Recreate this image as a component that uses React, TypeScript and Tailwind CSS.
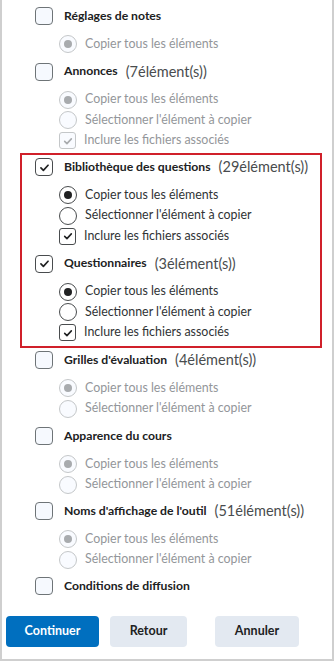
import React from 'react';

type Sub = { kind: 'radio' | 'check'; label: string; on: boolean };

type Section = {
  title: string;
  count?: string;
  checked: boolean;
  subs: Sub[];
  mt: string;
};

const Check = ({ size = 'h-[16px] w-[16px]', stroke = '#202122' }: { size?: string; stroke?: string }) => (
  <svg viewBox="0 0 16 16" className={size} fill="none">
    <path d="M4.2 8.4l2.6 2.6 5-5.4" stroke={stroke} strokeWidth="1.8" strokeLinecap="round" strokeLinejoin="round" />
  </svg>
);

const SubRow = ({ sub, enabled }: { sub: Sub; enabled: boolean }) => {
  return (
    <div className="flex h-[20.5px] items-center pl-[24px]">
      {sub.kind === 'radio' ? (
        <span
          className={
            enabled
              ? 'flex h-[18px] w-[18px] items-center justify-center rounded-full border border-[#494c4e] bg-white'
              : 'flex h-[18px] w-[18px] items-center justify-center rounded-full border border-[#c4c7c9] bg-[#f9fbff]'
          }
        >
          {sub.on && (
            <span className={enabled ? 'h-[8px] w-[8px] rounded-full bg-[#202122]' : 'h-[8px] w-[8px] rounded-full bg-[#a8abae]'} />
          )}
        </span>
      ) : (
        <span
          className={
            enabled
              ? 'flex h-[17px] w-[17px] items-center justify-center rounded-[3px] border border-[#494c4e] bg-white'
              : 'flex h-[17px] w-[17px] items-center justify-center rounded-[3px] border border-[#c4c7c9] bg-[#f9fbff]'
          }
        >
          {sub.on && <Check size="h-[14px] w-[14px]" stroke={enabled ? '#202122' : '#a8abae'} />}
        </span>
      )}
      <span
        className={
          enabled
            ? 'ml-[8px] whitespace-nowrap text-[12.4px] text-[#303335]'
            : 'ml-[8px] whitespace-nowrap text-[12.4px] text-[#93969a]'
        }
      >
        {sub.label}
      </span>
    </div>
  );
};

const SectionBlock = ({ s }: { s: Section }) => (
  <div className={s.mt}>
    <div className="flex h-6 items-center whitespace-nowrap">
      <span
        className={
          s.checked
            ? 'flex h-[18px] w-[18px] shrink-0 items-center justify-center rounded-[4px] border border-[#494c4e] bg-white'
            : 'flex h-[18px] w-[18px] shrink-0 items-center justify-center rounded-[4px] border border-[#6e7477] bg-[#f6f9fe]'
        }
      >
        {s.checked && <Check size="h-[15px] w-[15px]" />}
      </span>
      <span className="ml-[11px] text-[12.2px] font-bold text-[#202122]">{s.title}</span>
      {s.count && <span className="ml-[8px] text-[14.5px] text-[#494c4e]">{s.count}</span>}
    </div>
    {s.subs.length > 0 && (
      <div className="mt-[6px]">
        {s.subs.map((sub, i) => (
          <SubRow key={i} sub={sub} enabled={s.checked} />
        ))}
      </div>
    )}
  </div>
);

const copyAll = (on = true): Sub => ({ kind: 'radio', label: 'Copier tous les éléments', on });
const selectOne: Sub = { kind: 'radio', label: "Sélectionner l'élément à copier", on: false };
const include: Sub = { kind: 'check', label: 'Inclure les fichiers associés', on: true };

const before: Section[] = [
  { title: 'Réglages de notes', checked: false, subs: [copyAll()], mt: 'mt-0' },
  { title: 'Annonces', count: '(7élément(s))', checked: false, subs: [copyAll(), selectOne, include], mt: 'mt-[5px]' },
];

const boxed: Section[] = [
  { title: 'Bibliothèque des questions', count: '(29élément(s))', checked: true, subs: [copyAll(), selectOne, include], mt: 'mt-0' },
  { title: 'Questionnaires', count: '(3élément(s))', checked: true, subs: [copyAll(), selectOne, include], mt: 'mt-[5px]' },
];

const after: Section[] = [
  { title: "Grilles d'évaluation", count: '(4élément(s))', checked: false, subs: [copyAll(), selectOne], mt: 'mt-0' },
  { title: 'Apparence du cours', checked: false, subs: [copyAll(), selectOne], mt: 'mt-[5px]' },
  { title: "Noms d'affichage de l'outil", count: '(51élément(s))', checked: false, subs: [copyAll(), selectOne], mt: 'mt-[4px]' },
  { title: 'Conditions de diffusion', checked: false, subs: [], mt: 'mt-[4px]' },
];

export default function App() {
  return (
    <div className="h-[662px] w-[335px] bg-white" style={{ fontFamily: 'Lato, "Noto Sans", sans-serif' }}>
      <div className="h-[661px] w-[334px] border-x-2 border-b-2 border-[#cfcfcf] pt-[4px]">
        <div className="pl-[33px]">
          {before.map((s, i) => (
            <SectionBlock key={i} s={s} />
          ))}
        </div>
        <div className="ml-[18px] mt-[2px] w-[302px] border-2 border-[#d0202a] pb-[3px] pl-[13px]">
          {boxed.map((s, i) => (
            <SectionBlock key={i} s={s} />
          ))}
        </div>
        <div className="pl-[33px]">
          {after.map((s, i) => (
            <SectionBlock key={i} s={s} />
          ))}
        </div>
        <div className="mt-[18px] flex pl-[4px]">
          <button className="h-[31px] w-[93px] rounded-[4px] bg-[#006fbf] text-[12.5px] font-bold text-white">Continuer</button>
          <button className="ml-[11px] h-[31px] w-[77px] rounded-[4px] bg-[#e3e9f1] text-[12.5px] font-bold text-[#202122]">Retour</button>
          <button className="ml-[28px] h-[31px] w-[84px] rounded-[4px] bg-[#e3e9f1] text-[12.5px] font-bold text-[#202122]">Annuler</button>
        </div>
      </div>
    </div>
  );
}
